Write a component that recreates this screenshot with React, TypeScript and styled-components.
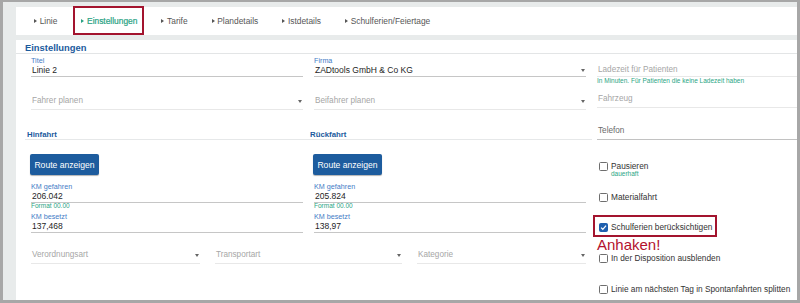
import React from "react";
import styled, { createGlobalStyle } from "styled-components";

const Global = createGlobalStyle`
  html, body { margin: 0; padding: 0; }
  body {
    background: #a7a7a7;
    font-family: "Liberation Sans", Arial, sans-serif;
  }
  * { box-sizing: border-box; }
`;

const Shell = styled.div`
  width: 800px;
  height: 303px;
  padding: 2px 3px 3px 3px;
  overflow: hidden;
`;

const Frame = styled.div`
  height: 100%;
  background: #e8ebeb;
  padding: 5px 0 0 13px;
  display: flex;
  flex-direction: column;
  gap: 5px;
`;

const TabBar = styled.nav`
  height: 28px;
  flex-shrink: 0;
  background: #fff;
  display: flex;
  align-items: center;
  padding-left: 6px;
`;

const Tab = styled.div<{ $active?: boolean }>`
  position: relative;
  height: 100%;
  display: flex;
  align-items: center;
  padding: 0 12px;
  font-size: 8.4px;
  color: ${(p) => (p.$active ? "#28a283" : "#565656")};
  -webkit-text-stroke: ${(p) => (p.$active ? "0.2px #28a283" : "0")};
`;

const Caret = styled.span`
  width: 0;
  height: 0;
  border-top: 2.5px solid transparent;
  border-bottom: 2.5px solid transparent;
  border-left: 3px solid currentColor;
  margin-right: 2.7px;
`;

const Marker = styled.span<{ $t: number; $r: number; $b: number; $l: number }>`
  position: absolute;
  top: ${(p) => p.$t}px;
  right: ${(p) => p.$r}px;
  bottom: ${(p) => p.$b}px;
  left: ${(p) => p.$l}px;
  border: 2px solid #a3142e;
  pointer-events: none;
`;

const Panel = styled.section`
  flex: 1;
  min-height: 0;
  background: #fff;
  overflow: hidden;
`;

const PanelTitle = styled.h2`
  margin: 0;
  height: 14px;
  padding: 3px 0 0 9px;
  font-size: 9.4px;
  line-height: 10px;
  font-weight: bold;
  color: #1b5b9d;
  border-bottom: 1px solid #e3e5e6;
`;

const FormGrid = styled.div`
  display: grid;
  grid-template-columns: 555px 272px;
  column-gap: 11px;
  padding-left: 15px;
`;

const Stack = styled.div`
  display: flex;
  flex-direction: column;
`;

const Pair = styled.div<{ $mt: number }>`
  display: grid;
  grid-template-columns: 272px 272px;
  column-gap: 11px;
  margin-top: ${(p) => p.$mt}px;
`;

const Triple = styled.div<{ $mt: number }>`
  display: grid;
  grid-template-columns: 169px 187px 1fr;
  column-gap: 15px;
  margin-top: ${(p) => p.$mt}px;
`;

const Field = styled.div<{ $mt?: number }>`
  margin-top: ${(p) => p.$mt ?? 0}px;
`;

const Label = styled.div`
  height: 8px;
  font-size: 7.2px;
  line-height: 8px;
  color: #3f7cc6;
  white-space: nowrap;
`;

const Control = styled.div<{ $filled?: boolean; $pb: number; $tone?: "dark" }>`
  display: flex;
  align-items: center;
  font-size: ${(p) => (p.$filled ? 8.5 : 8.2)}px;
  line-height: 10px;
  padding: 0 0 ${(p) => p.$pb}px 1px;
  white-space: nowrap;
  color: ${(p) => (p.$filled ? "#1e1e1e" : p.$tone === "dark" ? "#6a6a6a" : "#a6a6a6")};
  border-bottom: 1px solid
    ${(p) => (p.$filled ? "#c6c6c6" : p.$tone === "dark" ? "#c2c2c2" : "#e8e8e8")};
`;

const Arrow = styled.span`
  margin-left: auto;
  margin-right: 1.5px;
  width: 0;
  height: 0;
  border-left: 2.5px solid transparent;
  border-right: 2.5px solid transparent;
  border-top: 3px solid #666;
`;

const Help = styled.div<{ $mt?: number; $indent?: number }>`
  margin-top: ${(p) => p.$mt ?? 0}px;
  margin-left: ${(p) => p.$indent ?? 0}px;
  height: 6px;
  font-size: 6.5px;
  line-height: 6px;
  color: #2aa583;
  white-space: nowrap;
`;

const Section = styled.div`
  display: flex;
  flex-direction: column;
  align-items: stretch;
`;

const SectionHead = styled.div`
  margin: 0 -6px;
  padding-left: 2px;
  height: 10px;
  font-size: 7.8px;
  line-height: 9px;
  font-weight: bold;
  color: #1b5b9d;
  border-bottom: 1px solid #e6e8e9;
`;

const Button = styled.button`
  align-self: flex-start;
  margin: 14px 0 0 -1px;
  width: 69px;
  height: 21px;
  padding: 0;
  border: none;
  border-radius: 2px;
  background: #1d5c9e;
  color: #fff;
  font-family: "Liberation Sans", Arial, sans-serif;
  font-size: 8.6px;
  white-space: nowrap;
  box-shadow: 0 1px 1px rgba(0, 0, 0, 0.3);
`;

const CheckRow = styled.div<{ $mt: number }>`
  position: relative;
  display: flex;
  align-items: center;
  gap: 3px;
  width: fit-content;
  margin-top: ${(p) => p.$mt}px;
  padding-left: 2px;
  height: 10px;
  font-size: 8.3px;
  line-height: 10px;
  color: #333;
  white-space: nowrap;
`;

const Box = styled.span<{ $checked?: boolean }>`
  width: 9px;
  height: 9px;
  flex-shrink: 0;
  display: flex;
  align-items: center;
  justify-content: center;
  border: 1px solid ${(p) => (p.$checked ? "#1f5fae" : "#6e6e6e")};
  border-radius: 1.5px;
  background: ${(p) => (p.$checked ? "#1f5fae" : "#fff")};
`;

const Shout = styled.div`
  margin: 5px 0 0 0;
  font-size: 15px;
  line-height: 15px;
  color: #b3112e;
`;

function Check({ checked }: { checked?: boolean }) {
  return (
    <Box $checked={checked}>
      {checked && (
        <svg width="7" height="7" viewBox="0 0 10 10">
          <path d="M1.5 5.2 L4 7.6 L8.6 2.4" fill="none" stroke="#fff" strokeWidth="1.8" />
        </svg>
      )}
    </Box>
  );
}

function TextField({ label, value, mt, pb = 1 }: { label: string; value: string; mt?: number; pb?: number }) {
  return (
    <Field $mt={mt}>
      <Label>{label}</Label>
      <Control $filled $pb={pb}>{value}</Control>
    </Field>
  );
}

function SelectField({
  placeholder,
  value,
  arrow = true,
  pb = 3,
  mt,
  tone,
}: {
  placeholder?: string;
  value?: string;
  arrow?: boolean;
  pb?: number;
  mt?: number;
  tone?: "dark";
}) {
  return (
    <Field $mt={mt}>
      <Label />
      <Control $filled={!!value} $pb={pb} $tone={tone}>
        {value ?? placeholder}
        {arrow && <Arrow />}
      </Control>
    </Field>
  );
}

function RouteSection({ title, km, kmBesetzt }: { title: string; km: string; kmBesetzt: string }) {
  return (
    <Section>
      <SectionHead>{title}</SectionHead>
      <Button>Route anzeigen</Button>
      <Field $mt={8}>
        <Label>KM gefahren</Label>
        <Control $filled $pb={1}>{km}</Control>
        <Help>Format 00.00</Help>
      </Field>
      <TextField label="KM besetzt" value={kmBesetzt} mt={4} />
    </Section>
  );
}

const tabs = ["Linie", "Einstellungen", "Tarife", "Plandetails", "Istdetails", "Schulferien/Feiertage"];

export default function App() {
  return (
    <Shell>
      <Global />
      <Frame>
        <TabBar>
          {tabs.map((t) => (
            <Tab key={t} $active={t === "Einstellungen"}>
              <Caret />
              {t}
              {t === "Einstellungen" && <Marker $t={-1} $r={5} $b={0} $l={4} />}
            </Tab>
          ))}
        </TabBar>
        <Panel>
          <PanelTitle>Einstellungen</PanelTitle>
          <FormGrid>
            <Stack>
              <Pair $mt={3}>
                <TextField label="Titel" value="Linie 2" />
                <Field>
                  <Label>Firma</Label>
                  <Control $filled $pb={1}>
                    ZADtools GmbH &amp; Co KG
                    <Arrow />
                  </Control>
                </Field>
              </Pair>
              <Pair $mt={11}>
                <SelectField placeholder="Fahrer planen" />
                <SelectField placeholder="Beifahrer planen" />
              </Pair>
              <Pair $mt={20}>
                <RouteSection title="Hinfahrt" km="206.042" kmBesetzt="137,468" />
                <RouteSection title="Rückfahrt" km="205.824" kmBesetzt="138,97" />
              </Pair>
              <Triple $mt={9}>
                <SelectField placeholder="Verordnungsart" />
                <SelectField placeholder="Transportart" />
                <SelectField placeholder="Kategorie" />
              </Triple>
            </Stack>
            <Stack>
              <SelectField placeholder="Ladezeit für Patienten" arrow={false} pb={1} mt={3} />
              <Help $mt={1}>In Minuten. Für Patienten die keine Ladezeit haben</Help>
              <SelectField placeholder="Fahrzeug" arrow={false} mt={2} />
              <SelectField placeholder="Telefon" arrow={false} mt={10} tone="dark" />
              <CheckRow $mt={21}>
                <Check />
                Pausieren
              </CheckRow>
              <Help $indent={14}>dauerhaft</Help>
              <CheckRow $mt={15}>
                <Check />
                Materialfahrt
              </CheckRow>
              <CheckRow $mt={20}>
                <Check checked />
                Schulferien berücksichtigen
                <Marker $t={-7} $r={-5} $b={-5} $l={-4} />
              </CheckRow>
              <Shout>Anhaken!</Shout>
              <CheckRow $mt={1}>
                <Check />
                In der Disposition ausblenden
              </CheckRow>
              <CheckRow $mt={21}>
                <Check />
                Linie am nächsten Tag in Spontanfahrten splitten
              </CheckRow>
            </Stack>
          </FormGrid>
        </Panel>
      </Frame>
    </Shell>
  );
}
